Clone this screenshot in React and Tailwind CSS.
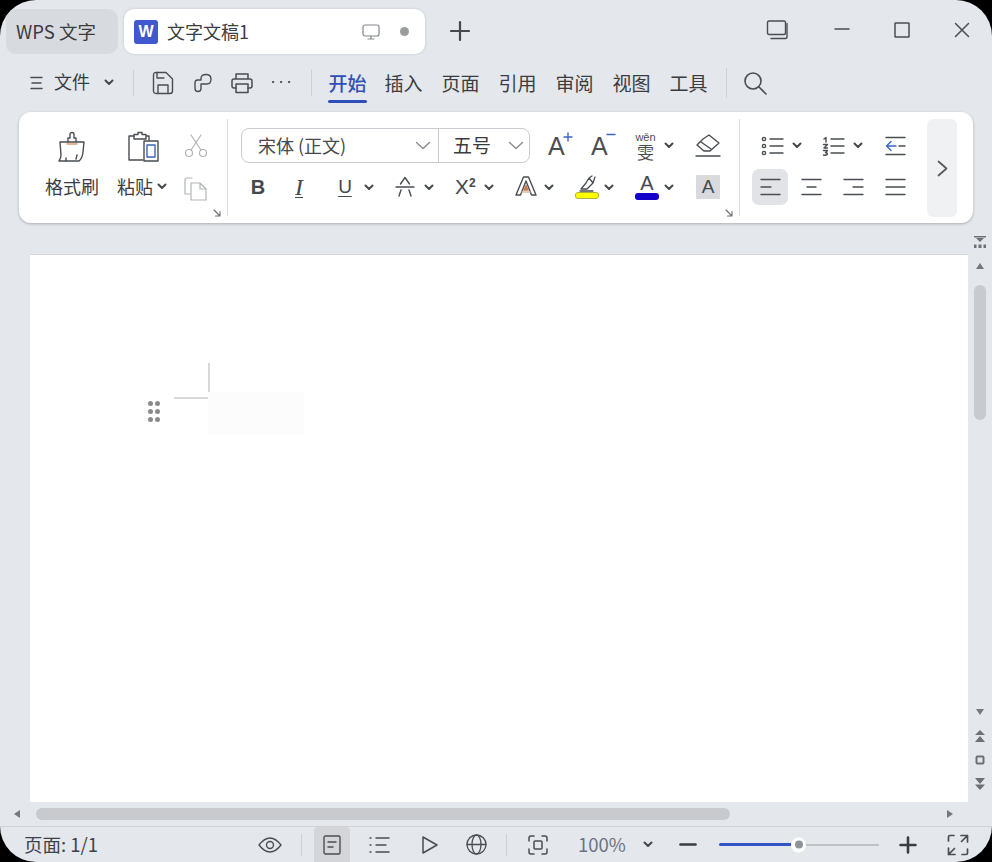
import React from "react";

const cjk = { fontFamily: '"Noto Sans CJK SC", "Noto Sans", sans-serif' };

function S({ w, h, sw = 1.5, className = "text-[#4a4d52]", children }) {
  return (
    <svg width={w} height={h} viewBox={`0 0 ${w} ${h}`} fill="none" stroke="currentColor" strokeWidth={sw} strokeLinecap="round" strokeLinejoin="round" className={`shrink-0 block ${className}`}>
      {children}
    </svg>
  );
}

const Chev = ({ className = "ml-[9px]" }) => (
  <span className={className}>
    <S w={10} h={7} sw={2} className="text-[#45484d]"><path d="M1.5 1.5 L5 5 L8.5 1.5" /></S>
  </span>
);
const Launcher = () => (
  <S w={8} h={8} sw={1.1} className="text-[#6b6e73]"><path d="M1 1 L7 7 M7 2.5 V7 H2.5" /></S>
);
const Sep = ({ h = 26, className = "" }) => <div className={`w-px bg-[#ced0d4] shrink-0 ${className}`} style={{ height: h }} />;

function MenuTab({ children, active, ml = "ml-[18px]" }) {
  return (
    <div className={`relative w-[39px] h-[42px] flex items-center justify-center whitespace-nowrap text-[19px] ${ml} ${active ? "text-[#2f50b8] font-medium" : "text-[#3a3c40]"}`}>
      {children}
      {active && <div className="absolute left-0 right-0 top-[38px] h-[3px] rounded-sm bg-[#2f50b8]" />}
    </div>
  );
}

function TitleBar() {
  return (
    <div className="h-[62px] flex items-start pt-[9px] pl-[6px] shrink-0">
      <div className="w-[112px] h-[45px] rounded-[10px] bg-[#d7dade] flex items-center pl-[10px] text-[18.5px] text-[#3a3c40] whitespace-nowrap">WPS 文字</div>
      <div className="ml-[6px] w-[301px] h-[45px] rounded-[10px] bg-white shadow-[0_0_3px_rgba(0,0,0,0.15)] flex items-center pl-[10px]">
        <div className="w-[24px] h-[24px] rounded-[3px] bg-[#3f57d1] text-white text-[16px] font-bold flex items-center justify-center" style={{ fontFamily: '"Liberation Sans", sans-serif' }}>W</div>
        <div className="ml-[9px] w-[195px] text-[18px] text-[#3a3c40] whitespace-nowrap">文字文稿1</div>
        <S w={18} h={16} sw={1.2} className="text-[#83868b]"><rect x="1" y="1" width="16" height="11" rx="2" /><path d="M6 15 H12 M9 12 V15" /></S>
        <div className="ml-[20px] w-[9px] h-[9px] rounded-full bg-[#9a9c9f]" />
      </div>
      <div className="ml-[24px] mt-[11px]">
        <S w={22} h={22} sw={2.2} className="text-[#45484d]"><path d="M11 2 V20 M2 11 H20" /></S>
      </div>
      <div className="mt-[11px] ml-[295px]">
        <S w={22} h={20} sw={1.4}><path d="M3 1 H18 Q19.5 1 19.5 2.5 V13 Q19.5 14.5 18 14.5 H3 Q1.5 14.5 1.5 13 V2.5 Q1.5 1 3 1 Z" /><path d="M21 3.5 V17 Q21 18.5 19.5 18.5 H5" /></S>
      </div>
      <div className="mt-[19px] ml-[46px]"><S w={16} h={2} sw={1.5}><path d="M1 1 H15" /></S></div>
      <div className="mt-[13px] ml-[44px]"><S w={16} h={16} sw={1.5}><rect x="1" y="1" width="14" height="14" rx="0.5" /></S></div>
      <div className="mt-[13px] ml-[44px]"><S w={16} h={16} sw={1.5}><path d="M1.5 1.5 L14.5 14.5 M14.5 1.5 L1.5 14.5" /></S></div>
    </div>
  );
}

function MenuBar() {
  return (
    <div className="h-[42px] flex items-center pl-[30px] shrink-0">
      <S w={13} h={14} sw={1.5}><path d="M1 1.5 H12 M2 7 H11 M1 12.5 H12" /></S>
      <div className="ml-[11px] -mt-[3px] w-[37px] text-[18px] text-[#3a3c40] whitespace-nowrap">文件</div>
      <Chev className="ml-[13px] -mt-[1px]" />
      <Sep className="ml-[19px]" />
      <div className="ml-[18px]">
        <S w={22} h={24} sw={1.4}><path d="M1.5 4 Q1.5 1.5 4 1.5 H14 L20.5 8 V20 Q20.5 22.5 18 22.5 H4 Q1.5 22.5 1.5 20 Z" /><path d="M5 1.5 V7 H12 M6 22 V14 H16 V22" /></S>
      </div>
      <div className="ml-[20px]">
        <S w={18} h={20} sw={1.4}><path d="M6 7 H3.5 Q1 7 1 10 Q1 13 1 15.5 Q1 18.5 4 18.5 Q7 18.5 7 15.5 V11 H13 Q17 11 17 6 Q17 1.5 12 1.5 Q7 1.5 7 5.5 V7" /></S>
      </div>
      <div className="ml-[19px]">
        <S w={22} h={22} sw={1.5}><path d="M5 7 V2 H17 V7 M5 16 H3 Q1 16 1 14 V9 Q1 7 3 7 H19 Q21 7 21 9 V14 Q21 16 19 16 H17" /><rect x="5" y="12" width="12" height="8.5" /></S>
      </div>
      <div className="ml-[18px] -mt-[3px]">
        <S w={20} h={4} sw={2.2}><path d="M2 2 H2.2 M10 2 H10.2 M18 2 H18.2" /></S>
      </div>
      <Sep className="ml-[20px]" />
      <MenuTab active ml="ml-[16px]">开始</MenuTab>
      <MenuTab ml="ml-[17px]">插入</MenuTab>
      <MenuTab>页面</MenuTab>
      <MenuTab>引用</MenuTab>
      <MenuTab>审阅</MenuTab>
      <MenuTab>视图</MenuTab>
      <MenuTab>工具</MenuTab>
      <Sep h={30} className="ml-[18px]" />
      <div className="ml-[16px]">
        <S w={24} h={24} sw={1.6}><circle cx="10" cy="10" r="8" /><path d="M16 16 L23 23" /></S>
      </div>
    </div>
  );
}

function GroupClipboard() {
  return (
    <div className="w-[208px] flex pl-[23px] shrink-0">
      <div className="w-[60px] flex flex-col items-center pt-[19px]">
        <S w={30} h={32} sw={1.4} className="text-[#4a4d52]">
          <path d="M11 11 V7 H13 V3.5 Q13 1.5 15 1.5 Q17 1.5 17 3.5 V7 H19 V11" />
          <path d="M3 11 H27 L26 21 Q25.5 27 22 30 H2 Q4 27 4 24 Z" />
          <path d="M9 30 V27 M20 24 L19 28" />
          <path d="M10 13 H20" className="text-[#dc9a6c]" />
        </S>
        <div className="mt-[11px] text-[18px] leading-[24px] text-[#3a3c40] whitespace-nowrap">格式刷</div>
      </div>
      <div className="ml-[13px] w-[56px] flex flex-col items-center pt-[19px]">
        <S w={32} h={32} sw={1.4} className="text-[#4a4d52]">
          <path d="M7 5 H2 V29 H16" /><path d="M7 5 V3.5 H11 V1.5 H15 V3.5 H19 V5 H22 V9 M7 5 V8 H19 V5" />
          <rect x="17" y="10" width="14" height="20" className="text-[#4a4d52]" />
          <rect x="20" y="14" width="8" height="12" className="text-[#3a63b8]" />
        </S>
        <div className="mt-[11px] flex items-center h-[24px] self-start pl-[2px]">
          <span className="text-[18px] text-[#3a3c40] whitespace-nowrap">粘贴</span>
          <Chev className="ml-[4px]" />
        </div>
      </div>
      <div className="ml-[13px] w-[24px] flex flex-col items-center pt-[22px]">
        <S w={24} h={24} sw={1.2} className="text-[#b2b4b8]">
          <circle cx="5" cy="19" r="3.5" /><circle cx="19" cy="19" r="3.5" /><path d="M7 16 L17 1 M17 16 L7 1" />
        </S>
        <div className="mt-[19px]">
          <S w={24} h={24} sw={1.2} className="text-[#b2b4b8]">
            <path d="M8 1 H3 Q1 1 1 3 V17 H6" /><path d="M7 6 H16 L22 12 V23 H7 Z M16 6 V12 H22" />
          </S>
        </div>
      </div>
      <div className="ml-[5px] self-end mb-[6px]"><Launcher /></div>
    </div>
  );
}

const Sel = ({ className = "" }) => (
  <S w={16} h={9} sw={1.3} className={`text-[#85888c] ${className}`}><path d="M1.5 1.5 L8 7.5 L14.5 1.5" /></S>
);

function GroupFont() {
  return (
    <div className="w-[511px] flex shrink-0">
      <div className="w-[497px] pl-[13px] pt-[16px] shrink-0">
        <div className="flex items-center h-[35px]">
          <div className="w-[289px] h-[35px] border border-[#c9cbd0] rounded-[8px] flex items-center shrink-0">
            <div className="w-[196px] h-full flex items-center pl-[16px]">
              <span className="w-[157px] text-[18px] text-[#45484d] whitespace-nowrap">宋体 (正文)</span>
              <Sel />
            </div>
            <div className="h-full flex-1 border-l border-[#c9cbd0] flex items-center pl-[14px]">
              <span className="w-[55px] text-[19px] text-[#3a3c40] whitespace-nowrap">五号</span>
              <Sel />
            </div>
          </div>
          <div className="ml-[18px] w-[24px] flex items-start relative h-[30px]">
            <span className="text-[25px] leading-[30px] font-light text-[#4a4d52]" style={{ fontFamily: '"Liberation Sans", sans-serif' }}>A</span>
            <span className="absolute left-[15px] top-[1px]"><S w={10} h={10} sw={1.4} className="text-[#3d66c2]"><path d="M5 1 V9 M1 5 H9" /></S></span>
          </div>
          <div className="ml-[19px] w-[24px] flex items-start relative h-[30px]">
            <span className="text-[25px] leading-[30px] font-light text-[#4a4d52]" style={{ fontFamily: '"Liberation Sans", sans-serif' }}>A</span>
            <span className="absolute left-[15px] top-[2px]"><S w={10} h={3} sw={1.4} className="text-[#3d66c2]"><path d="M1 1.5 H9" /></S></span>
          </div>
          <div className="ml-[18px] w-[25px] flex flex-col items-center text-[#4a4d52]">
            <span className="text-[11px] leading-[12px] whitespace-nowrap" style={{ fontFamily: '"Liberation Sans", sans-serif' }}>wěn</span>
            <span className="text-[17px] leading-[18px]">雯</span>
          </div>
          <Chev className="ml-[6px]" />
          <div className="ml-[21px]">
            <S w={26} h={24} sw={1.4}><path d="M8 5 L14 1 L24 9 L15 17 H9 L2 11 Z M6 8 L16 15" /><path d="M1 22 H25" /></S>
          </div>
        </div>
        <div className="mt-[12px] flex items-center h-[24px] pl-[7px] text-[#45484d]" style={{ fontFamily: '"Liberation Sans", sans-serif' }}>
          <span className="w-[20px] text-center text-[20px] font-bold leading-[24px]">B</span>
          <span className="ml-[21px] w-[20px] text-center text-[24px] italic leading-[24px] underline underline-offset-2 decoration-1" style={{ fontFamily: '"Liberation Serif", serif' }}>I</span>
          <span className="ml-[26px] w-[20px] text-center text-[19px] leading-[24px] underline underline-offset-3 decoration-1">U</span>
          <Chev />
          <span className="ml-[21px]">
            <S w={20} h={22} sw={1.4}><path d="M5.5 8 L10 1.5 L14.5 8 M1 11 H19 M6 14 L4 20 M14 14 L16 20" /></S>
          </span>
          <Chev />
          <span className="ml-[21px] w-[20px] text-[21px] leading-[24px] whitespace-nowrap">X<sup className="text-[12px] font-bold -top-[7px] relative align-baseline">2</sup></span>
          <Chev />
          <span className="ml-[21px] relative w-[20px] h-[24px] block">
            <S w={22} h={22} sw={1.4}><path d="M1 20 L8.5 2 H13.5 L21 20 H16.5 L11 6 L5.5 20 Z" /><path d="M9 15 L11 10.5 L13 15 Z" fill="#c97c4e" className="text-[#c97c4e]" /><path d="M7 17 H15" className="text-[#dcb9a4]" /></S>
          </span>
          <Chev />
          <span className="ml-[21px] w-[24px] flex flex-col items-center">
            <S w={24} h={17} sw={1.3}><path d="M11 8 L6 14 L12 14 L18 8 L14 3 Z M14 3 L17 1 M5 16 H18 M20 2 L18 8" /></S>
            <span className="w-[24px] h-[7px] rounded-[3px] bg-[#ffff00] border border-[#b0b040]" />
          </span>
          <Chev className="ml-[5px]" />
          <span className="ml-[21px] w-[24px] flex flex-col items-center">
            <span className="text-[20px] leading-[17px] font-light">A</span>
            <span className="mt-[1px] w-[24px] h-[7px] rounded-[3px] bg-[#1400c8]" />
          </span>
          <Chev className="ml-[5px]" />
          <span className="ml-[22px] w-[24px] h-[24px] flex items-center justify-center bg-[#d8dade] text-[19px] leading-[24px] font-light rounded-[1px]">A</span>
        </div>
      </div>
      <div className="self-end mb-[6px] text-[#6b6e73]"><Launcher /></div>
    </div>
  );
}

function Align({ kind }) {
  const d = {
    left: "M1 1.5 H20 M1 9 H11 M1 16.5 H20",
    center: "M1 1.5 H20 M6 9 H15 M1 16.5 H20",
    right: "M1 1.5 H20 M10 9 H20 M1 16.5 H20",
    just: "M1 1.5 H20 M1 9 H20 M1 16.5 H20",
  }[kind];
  return <S w={21} h={18} sw={1.4}><path d={d} /></S>;
}

function GroupPara() {
  return (
    <div className="w-[187px] pt-[16px] shrink-0">
      <div className="h-[35px] flex items-center pl-[21px]">
        <S w={23} h={20} sw={1.4}>
          <circle cx="3" cy="3" r="1.6" /><circle cx="3" cy="10" r="1.6" /><circle cx="3" cy="17" r="1.6" />
          <path d="M9 3 H22 M9 10 H22 M9 17 H22" />
        </S>
        <Chev className="ml-[8px]" />
        <span className="ml-[20px] relative w-[23px] h-[20px] block">
          <S w={23} h={20} sw={1.4}>
            <path d="M9 3 H22 M9 10 H22 M9 17 H22" />
            <path d="M2 3 L4 1.5 V6 M1.5 8.5 H5.5 L2 12 H5.5 M1.5 14.5 H5.5 L3.5 16.5 Q5.5 17 5.5 18 Q4 20 1.5 19" />
          </S>
        </span>
        <Chev className="ml-[8px]" />
        <span className="ml-[22px]">
          <S w={21} h={20} sw={1.4}>
            <path d="M1 1.5 H20 M1 18.5 H20 M14 10 H20" />
            <path d="M11 10 H2 M6 5.5 L1.5 10 L6 14.5" className="text-[#3d66c2]" />
          </S>
        </span>
      </div>
      <div className="mt-[6px] h-[36px] flex items-center pl-[12px]">
        <div className="w-[36px] h-[36px] rounded-[7px] bg-[#e2e3e7] flex items-center justify-center"><Align kind="left" /></div>
        <div className="ml-[5px] w-[36px] flex justify-center"><Align kind="center" /></div>
        <div className="ml-[6px] w-[36px] flex justify-center"><Align kind="right" /></div>
        <div className="ml-[6px] w-[36px] flex justify-center"><Align kind="just" /></div>
      </div>
    </div>
  );
}

function Ribbon() {
  return (
    <div className="mt-[8px] ml-[19px] w-[954px] h-[111px] rounded-[12px] bg-white shadow-[0_1px_3px_rgba(0,0,0,0.25)] flex shrink-0">
      <GroupClipboard />
      <div className="w-px my-[7px] bg-[#dcdee2] shrink-0" />
      <GroupFont />
      <div className="w-px my-[7px] bg-[#dcdee2] shrink-0" />
      <GroupPara />
      <div className="w-[30px] h-[98px] mt-[7px] rounded-[6px] bg-[#f0f1f3] flex items-center justify-center shrink-0">
        <S w={11} h={17} sw={1.7} className="text-[#54575c]"><path d="M1.5 1.5 L9.5 8.5 L1.5 15.5" /></S>
      </div>
    </div>
  );
}

const Tri = ({ dir = "up" }) => {
  const d = { up: "M1 7 L5 1 L9 7 Z", down: "M1 1 L5 7 L9 1 Z", left: "M7 1 L1 5 L7 9 Z", right: "M1 1 L7 5 L1 9 Z" }[dir];
  const horiz = dir === "left" || dir === "right";
  return (
    <svg width={horiz ? 8 : 10} height={horiz ? 10 : 8} viewBox={horiz ? "0 0 8 10" : "0 0 10 8"} className="block shrink-0 text-[#75787c]" fill="currentColor"><path d={d} /></svg>
  );
};

function VScroll() {
  return (
    <div className="w-[24px] flex flex-col items-center pt-[13px] shrink-0 text-[#6d7074]">
      <svg width="12" height="12" viewBox="0 0 12 12" fill="currentColor" className="block"><path d="M0 0 H12 V1.5 H0 Z M2 2 H10 L6 6 Z M0 8.5 H2.5 V12 H0 Z M4.5 8.5 H7.5 V12 H4.5 Z M9.5 8.5 H12 V12 H9.5 Z" /></svg>
      <div className="mt-[14px]"><Tri dir="up" /></div>
      <div className="mt-[15px] w-[12px] h-[135px] rounded-full bg-[#c8cacd]" />
      <div className="mt-[288px]"><Tri dir="down" /></div>
      <svg width="12" height="12" viewBox="0 0 12 12" fill="currentColor" className="block mt-[14px]"><path d="M6 0 L11 5 H1 Z M6 6 L11 12 H1 Z" /></svg>
      <svg width="10" height="10" viewBox="0 0 10 10" fill="none" stroke="currentColor" strokeWidth="2" className="block mt-[13px]"><rect x="1.5" y="1.5" width="7" height="7" rx="1" /></svg>
      <svg width="12" height="12" viewBox="0 0 12 12" fill="currentColor" className="block mt-[13px]"><path d="M1 0 H11 L6 6 Z M1 6.5 H11 L6 12 Z" /></svg>
    </div>
  );
}

function Page() {
  return (
    <div className="relative w-[938px] h-[548px] bg-white border-t border-[#d4d6da]">
      <div className="absolute left-[178px] top-[108px] w-[2px] h-[35px] bg-[#d9d9d9]" />
      <div className="absolute left-[144px] top-[142px] w-[41px] h-[2px] bg-[#d9d9d9]" />
      <div className="absolute left-[178px] top-[137px] w-[96px] h-[43px] bg-[#fcfcfc]" />
      <div className="absolute left-[118px] top-[146px] grid grid-cols-2 gap-x-[2px] gap-y-[3px]">
        {[0, 1, 2, 3, 4, 5].map((i) => <div key={i} className="w-[5px] h-[5px] rounded-full bg-[#8a8a8a]" />)}
      </div>
    </div>
  );
}

function Main() {
  return (
    <div className="h-[579px] flex shrink-0">
      <div className="w-[968px] pl-[30px] pt-[31px] shrink-0"><Page /></div>
      <VScroll />
    </div>
  );
}

function HScroll() {
  return (
    <div className="h-[25px] flex items-center border-b border-[#cfd1d5] shrink-0 pl-[13px]">
      <Tri dir="left" />
      <div className="ml-[15px] w-[694px] h-[12px] rounded-full bg-[#c8cacd]" />
      <div className="ml-[216px]"><Tri dir="right" /></div>
    </div>
  );
}

function Status() {
  return (
    <div className="h-[35px] flex items-center pl-[24px] text-[#3f4247] shrink-0">
      <div className="w-[76px] text-[18.5px] whitespace-nowrap">页面: 1/1</div>
      <div className="ml-[158px]">
        <S w={24} h={16} sw={1.4}><path d="M1 8 Q12 -6 23 8 Q12 22 1 8 Z" /><circle cx="12" cy="8" r="3.5" /></S>
      </div>
      <Sep h={22} className="ml-[19px]" />
      <div className="ml-[12px] w-[36px] h-[35px] bg-[#d3d5d9] flex items-center justify-center rounded-t-[4px]">
        <S w={18} h={20} sw={1.4}><rect x="1" y="1" width="16" height="18" rx="1.5" /><path d="M5 7 H13 M5 12 H10" /></S>
      </div>
      <div className="ml-[19px]">
        <S w={21} h={18} sw={1.4}><path d="M1 2 H2 M7 2 H20 M1 9 H2 M7 9 H17 M1 16 H2 M7 16 H20" /></S>
      </div>
      <div className="ml-[31px]">
        <S w={18} h={20} sw={1.5}><path d="M2 2 L16 10 L2 18 Z" /></S>
      </div>
      <div className="ml-[27px]">
        <S w={21} h={21} sw={1.3}><circle cx="10.5" cy="10.5" r="9.5" /><ellipse cx="10.5" cy="10.5" rx="4.5" ry="9.5" /><path d="M1 10.5 H20" /></S>
      </div>
      <Sep h={22} className="ml-[19px]" />
      <div className="ml-[21px]">
        <S w={20} h={20} sw={1.5}><path d="M1 6 V3 Q1 1 3 1 H6 M14 1 H17 Q19 1 19 3 V6 M19 14 V17 Q19 19 17 19 H14 M6 19 H3 Q1 19 1 17 V14" /><rect x="6" y="6" width="8" height="8" rx="1" /></S>
      </div>
      <div className="ml-[30px] w-[48px] text-[18.5px] text-[#6c7285] whitespace-nowrap">100%</div>
      <Chev className="ml-[17px]" />
      <div className="ml-[26px]"><S w={18} h={3} sw={2.6} className="text-[#3a3c40]"><path d="M1.5 1.5 H16.5" /></S></div>
      <div className="ml-[22px] w-[160px] flex items-center relative">
        <div className="w-[72px] h-[3px] bg-[#3353c8] rounded-l" />
        <div className="flex-1 h-[2px] bg-[#bfc1c5]" />
        <div className="absolute left-[72px] top-1/2 -translate-y-1/2 w-[15px] h-[15px] rounded-full bg-white flex items-center justify-center">
          <div className="w-[8px] h-[8px] rounded-full bg-[#8f9296]" />
        </div>
      </div>
      <div className="ml-[20px]"><S w={18} h={18} sw={2.6} className="text-[#3a3c40]"><path d="M9 1.5 V16.5 M1.5 9 H16.5" /></S></div>
      <div className="ml-[30px]">
        <S w={22} h={22} sw={1.7}><path d="M1.5 7 V3 Q1.5 1.5 3 1.5 H7 M14 1.5 H20.5 V8 M20.5 1.5 L14.5 7.5 M1.5 14 V20.5 H8 M1.5 20.5 L7.5 14.5 M20.5 15 V19 Q20.5 20.5 19 20.5 H15" /></S>
      </div>
    </div>
  );
}

export default function App() {
  return (
    <div className="w-[992px] h-[862px] bg-black overflow-hidden" style={cjk}>
      <div className="w-full h-full bg-[#e4e7ec] rounded-[36px] overflow-hidden flex flex-col">
        <TitleBar />
        <MenuBar />
        <Ribbon />
        <Main />
        <HScroll />
        <Status />
      </div>
    </div>
  );
}
